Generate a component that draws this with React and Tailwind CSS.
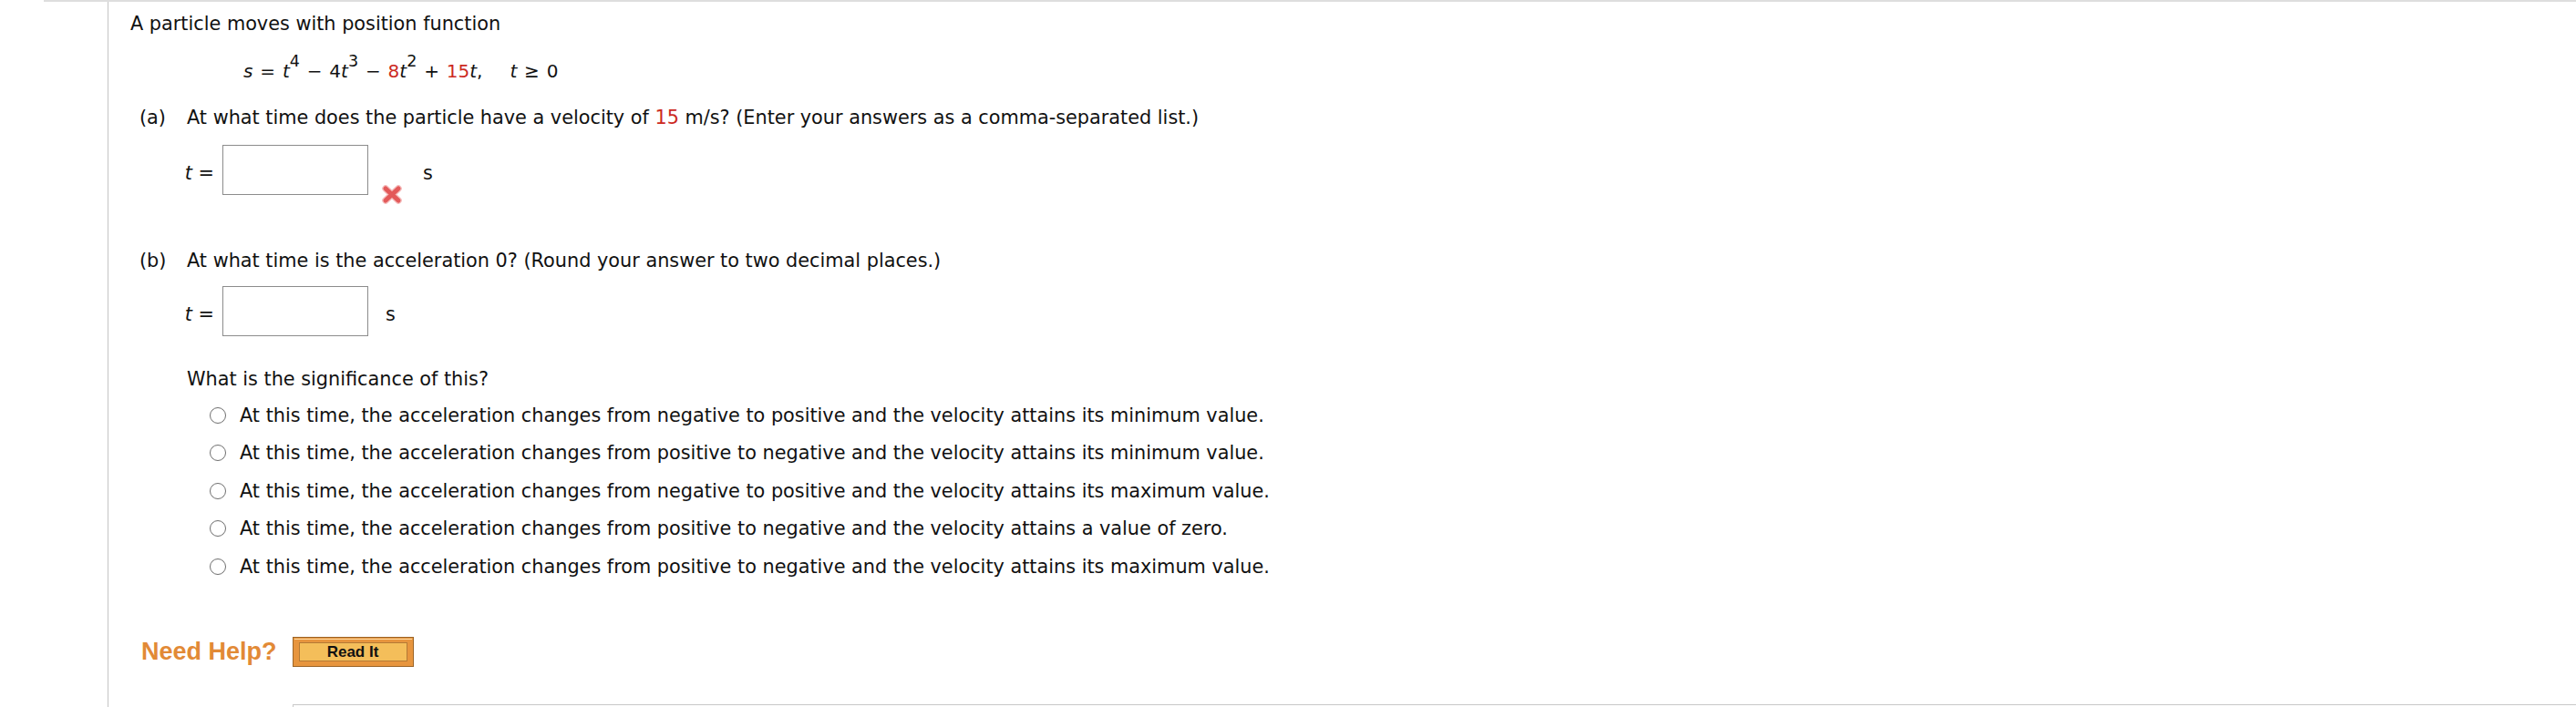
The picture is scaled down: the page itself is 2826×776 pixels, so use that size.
import React from "react";

const options = [
  "At this time, the acceleration changes from negative to positive and the velocity attains its minimum value.",
  "At this time, the acceleration changes from positive to negative and the velocity attains its minimum value.",
  "At this time, the acceleration changes from negative to positive and the velocity attains its maximum value.",
  "At this time, the acceleration changes from positive to negative and the velocity attains a value of zero.",
  "At this time, the acceleration changes from positive to negative and the velocity attains its maximum value.",
];

const WrongMark = () => (
  <svg width="22" height="21" viewBox="0 0 22 21">
    <g strokeLinecap="round">
      <path d="M4 4 L18 17 M18 4 L4 17" stroke="#f5bcbc" strokeWidth="7.5" />
      <path d="M4 4 L18 17 M18 4 L4 17" stroke="#e35a5a" strokeWidth="5" />
    </g>
  </svg>
);

const AnswerRow = ({ unitGap, children }) => (
  <div className="flex items-start h-[55px] ml-[62px]">
    <div className="w-[39px] pr-[9px] mt-[19px] flex justify-end whitespace-nowrap">
      <span className="italic">t</span>&nbsp;=
    </div>
    <div className="w-[160px] h-[55px] border border-[#8c8c8c] bg-white shrink-0" />
    {children}
    <span className={`mt-[19px] ${unitGap}`}>s</span>
  </div>
);

export default function App() {
  return (
    <div className="bg-white w-full h-[776px] overflow-hidden text-[#111] font-['DejaVu_Sans',Verdana,sans-serif] text-[20.8px] leading-[24px]">
      <div className="ml-[48px] border-t-2 border-[#dedede]">
        <div className="ml-[70px] border-l border-[#c4c4c4] h-[774px] pl-[24px] pt-[12px]">
          <p>A particle moves with position function</p>

          {/* equation */}
          <div className="mt-[28px] ml-[124px] text-[20px] whitespace-nowrap [word-spacing:1.5px]">
            <span className="italic">s</span> = <span className="italic">t</span>
            <sup className="text-[17.5px] top-[-12px]">4</sup> − 4<span className="italic">t</span>
            <sup className="text-[17.5px] top-[-12px]">3</sup> − <span className="text-[#cc2a1f]">8</span>
            <span className="italic">t</span>
            <sup className="text-[17.5px] top-[-12px]">2</sup> + <span className="text-[#cc2a1f]">15</span>
            <span className="italic">t</span>,
            <span className="ml-[30px] italic">t</span> ≥ 0
          </div>

          {/* part a */}
          <div className="mt-[27px] flex whitespace-nowrap">
            <span className="ml-[10px] w-[52px]">(a)</span>
            <span>
              At what time does the particle have a velocity of <span className="text-[#cc2a1f]">15</span> m/s? (Enter your answers as a comma-separated list.)
            </span>
          </div>
          <div className="mt-[18px]">
            <AnswerRow unitGap="ml-[23px]">
              <div className="ml-[15px] mt-[44px] w-[22px] h-[21px] shrink-0">
                <WrongMark />
              </div>
            </AnswerRow>
          </div>

          {/* part b */}
          <div className="mt-[60px] flex whitespace-nowrap">
            <span className="ml-[10px] w-[52px]">(b)</span>
            <span>At what time is the acceleration 0? (Round your answer to two decimal places.)</span>
          </div>
          <div className="mt-[16px]">
            <AnswerRow unitGap="ml-[19px]" />
          </div>

          <p className="mt-[35px] ml-[62px]">What is the significance of this?</p>
          <div className="mt-[7px] ml-[87px]">
            {options.map((o) => (
              <div key={o} className="flex items-center h-[41.5px] whitespace-nowrap">
                <span className="w-[18px] h-[18px] rounded-full border-[1.5px] border-[#6e6e6e] bg-white shrink-0" />
                <span className="ml-[15px]">{o}</span>
              </div>
            ))}
          </div>

          {/* help */}
          <div className="mt-[56px] ml-[12px] flex items-center h-[33px]">
            <span className="font-['Liberation_Sans',Arial,sans-serif] font-bold text-[27px] leading-[33px] text-[#e28a36]">
              Need Help?
            </span>
            <button className="ml-[17px] w-[133px] h-[33px] border border-[#9c6528] bg-[#e7953e] p-0 flex">
              <span className="m-[1px] flex-1 border-t border-[#fbd9a4] flex px-[5px] pt-[3px] pb-[4px]">
                <span className="flex-1 border border-[#b47a36] bg-[#f4be5a] flex items-center justify-center font-['Liberation_Sans',Arial,sans-serif] font-bold text-[17px] leading-none text-[#111]">
                  Read It
                </span>
              </span>
            </button>
          </div>

          <div className="mt-[41px] ml-[178px] h-[6px] border-t border-l border-[#c8c8c8]" />
        </div>
      </div>
    </div>
  );
}
